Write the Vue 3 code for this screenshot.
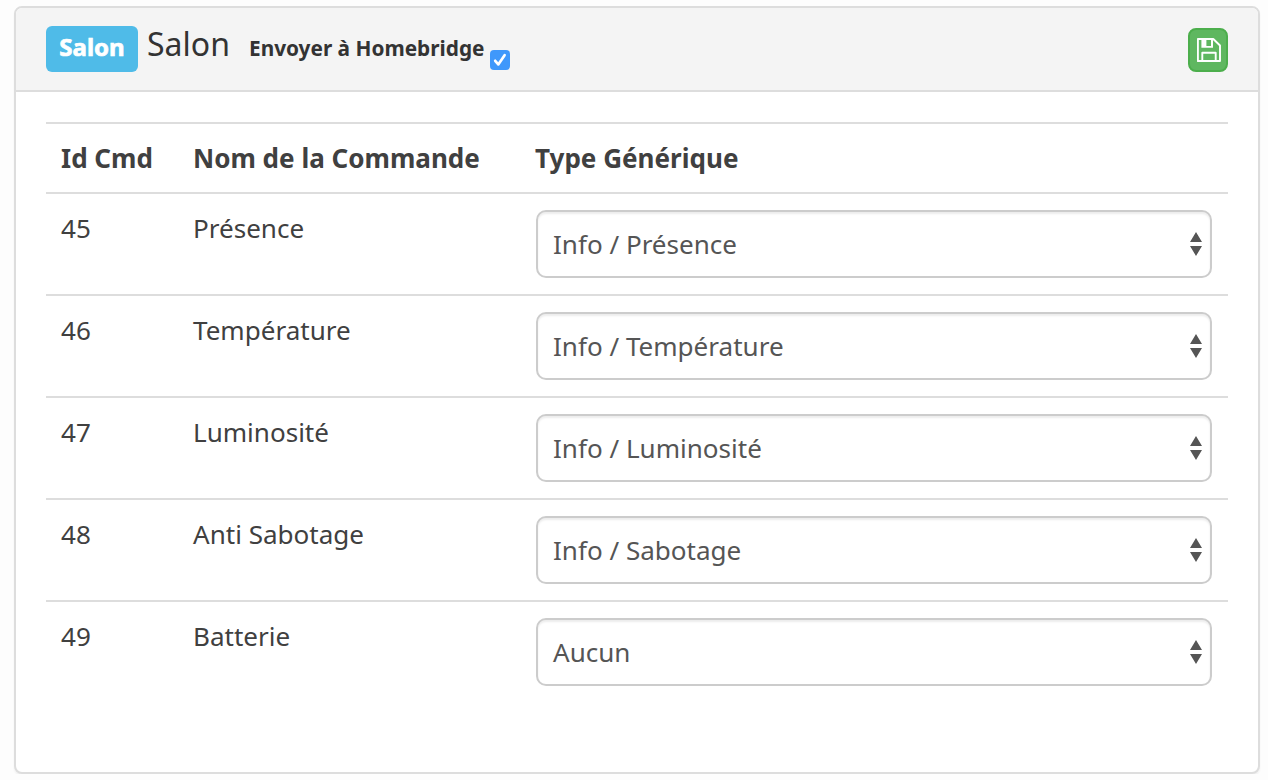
<script setup>
import { ref } from 'vue'

const enabled = ref(true)
const commands = [
  { id: 45, name: 'Présence', type: 'Info / Présence' },
  { id: 46, name: 'Température', type: 'Info / Température' },
  { id: 47, name: 'Luminosité', type: 'Info / Luminosité' },
  { id: 48, name: 'Anti Sabotage', type: 'Info / Sabotage' },
  { id: 49, name: 'Batterie', type: 'Aucun' },
]
</script>

<template>
  <section class="panel">
    <header class="heading">
      <span class="badge">Salon</span>
      <span class="title">Salon</span>
      <span class="label">Envoyer à Homebridge</span>
      <span class="check" role="checkbox" :aria-checked="enabled" @click="enabled = !enabled">
        <svg v-if="enabled" viewBox="0 0 20 20" width="20" height="20">
          <path d="M5.2 10.8 L8.3 14.4 L14.6 5.2" fill="none" stroke="#fff" stroke-width="2.7" stroke-linecap="round" stroke-linejoin="round" />
        </svg>
      </span>
      <button class="save" type="button" aria-label="Sauvegarder">
        <svg viewBox="0 0 24 24" width="24" height="24">
          <path d="M0.9 1 H16.3 L23 7.5 V23 H0.9 Z" fill="none" stroke="#fff" stroke-width="1.9" stroke-linejoin="round" />
          <path fill-rule="evenodd" d="M4.4 1 H16 V9.8 H4.4 Z M9.4 2 V8 H14 V2 Z" fill="#fff" />
          <path d="M5.3 23 V14.7 H18.7 V23" fill="none" stroke="#fff" stroke-width="1.9" stroke-linejoin="round" />
        </svg>
      </button>
    </header>

    <div class="body">
      <div class="row head">
        <span>Id Cmd</span>
        <span>Nom de la Commande</span>
        <span>Type Générique</span>
      </div>
      <div v-for="cmd in commands" :key="cmd.id" class="row">
        <span class="cell">{{ cmd.id }}</span>
        <span class="cell">{{ cmd.name }}</span>
        <div class="select">
          <span>{{ cmd.type }}</span>
          <svg viewBox="0 0 12 24" width="12" height="24">
            <path d="M6 0 L12 10 H0 Z M0 14 H12 L6 24 Z" fill="#555" />
          </svg>
        </div>
      </div>
    </div>
  </section>
</template>

<style>
body {
  background: #fdfdfd;
  overflow: hidden;
}
</style>

<style scoped>
.panel {
  box-sizing: border-box;
  width: 1246px;
  height: 768px;
  margin: 6px 0 0 14px;
  border: 2px solid #ddd;
  border-radius: 8px;
  background: #fff;
  box-shadow: 0 2px 2px rgba(0, 0, 0, 0.05);
  font-family: "Noto Sans", sans-serif;
  font-size: 26.05px;
  line-height: 36px;
  color: #404040;
  overflow: hidden;
}
.heading {
  box-sizing: border-box;
  display: flex;
  align-items: flex-start;
  height: 84px;
  padding: 18px 30px 0;
  background: #f4f4f4;
  border-bottom: 2px solid #ddd;
  color: #333;
  white-space: nowrap;
}
.badge {
  box-sizing: border-box;
  width: 92px;
  height: 46px;
  border-radius: 6px;
  background: #4fbbe8;
  color: #fff;
  font-size: 24px;
  font-weight: 700;
  line-height: 41px;
  text-align: center;
  -webkit-text-stroke: 0.7px #fff;
}
.title {
  width: 102px;
  margin-left: 9px;
  font-size: 32px;
  line-height: 36px;
}
.label {
  width: 241px;
  font-size: 20.8px;
  font-weight: 700;
  line-height: 44px;
}
.check {
  width: 20px;
  height: 20px;
  margin-top: 24px;
  border-radius: 4px;
  background: #3f98fb;
}
.check svg,
.save svg {
  display: block;
}
.save {
  box-sizing: border-box;
  width: 40px;
  height: 44px;
  margin: 2px 0 0 auto;
  padding: 0 7px;
  border: 2px solid #4cae4c;
  border-radius: 8px;
  background: #5fb760;
}
.body {
  padding: 30px;
}
.row {
  box-sizing: border-box;
  display: grid;
  grid-template-columns: 132px 343px 676px;
  height: 102px;
  padding: 16px 15px 0;
  border-top: 2px solid #ddd;
}
.head {
  height: 70px;
  grid-template-columns: 132px 342px 677px;
  font-weight: 700;
}
.select {
  box-sizing: border-box;
  display: flex;
  align-items: center;
  justify-content: space-between;
  height: 68px;
  padding: 0 8px 0 15px;
  border: 2px solid #ccc;
  border-radius: 10px;
  box-shadow: inset 0 2px 2px rgba(0, 0, 0, 0.075);
  color: #555;
}
</style>
